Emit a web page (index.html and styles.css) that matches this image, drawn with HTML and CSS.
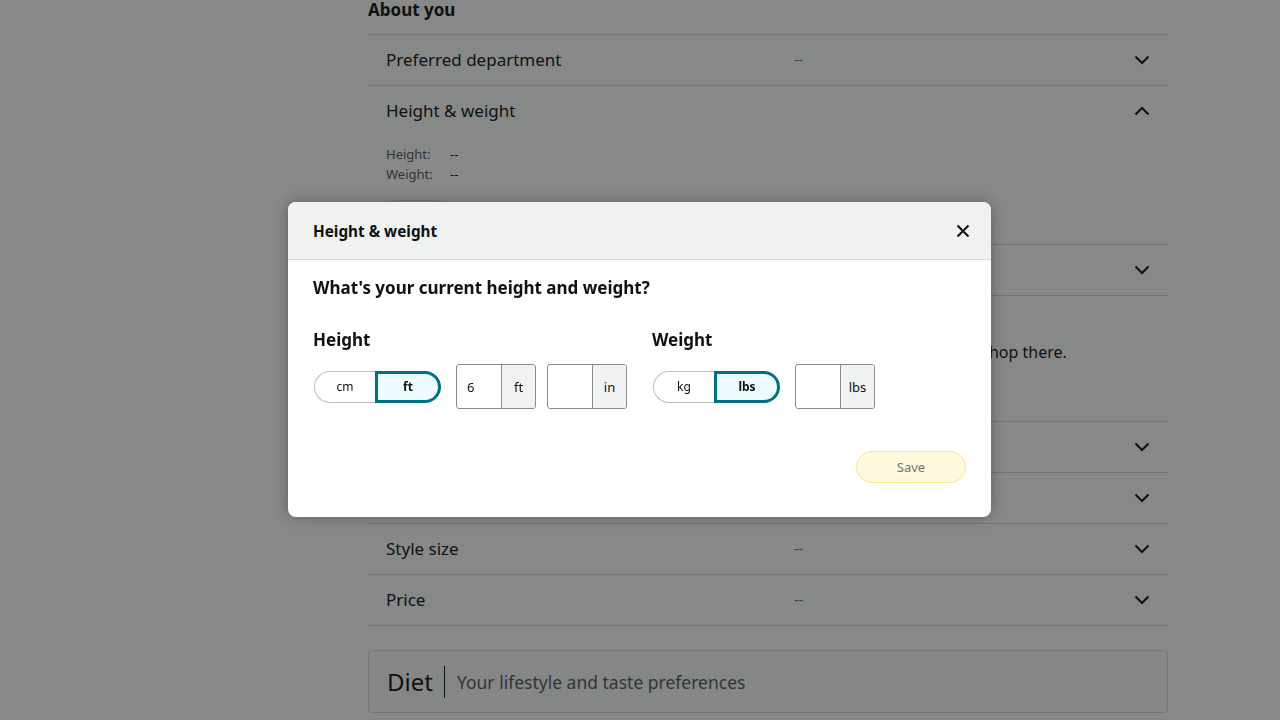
FILE: index.html
```html
<!DOCTYPE html>
<html lang="en">
<head>
<meta charset="utf-8">
<title>Height &amp; weight</title>
<link rel="stylesheet" href="styles.css">
</head>
<body>
<main class="page">
  <h2 class="section-title">About you</h2>
  <div class="list">
    <div class="row">
      <span class="row-label">Preferred department</span>
      <span class="row-value">--</span>
      <svg class="chev" viewBox="0 0 16 10"><path d="M1.5 1.5 L8 8 L14.5 1.5"/></svg>
    </div>
    <div class="row-expanded">
      <div class="row">
        <span class="row-label">Height &amp; weight</span>
        <span class="row-value"></span>
        <svg class="chev" viewBox="0 0 16 10"><path d="M1.5 8.5 L8 2 L14.5 8.5"/></svg>
      </div>
      <dl class="details">
        <div class="detail"><dt>Height:</dt><dd>--</dd></div>
        <div class="detail"><dt>Weight:</dt><dd>--</dd></div>
      </dl>
      <button class="edit-btn">Edit</button>
    </div>
    <div class="row">
      <span class="row-label">Body shape</span>
      <span class="row-value">--</span>
      <svg class="chev" viewBox="0 0 16 10"><path d="M1.5 1.5 L8 8 L14.5 1.5"/></svg>
    </div>
    <div class="block">
      <div class="block-title">Brands</div>
      <p class="block-text">Tell us the brands you like so we can show you more styles from the places you shop there.</p>
    </div>
    <div class="row">
      <span class="row-label">Fit</span>
      <span class="row-value">--</span>
      <svg class="chev" viewBox="0 0 16 10"><path d="M1.5 1.5 L8 8 L14.5 1.5"/></svg>
    </div>
    <div class="row">
      <span class="row-label">Clothing size</span>
      <span class="row-value">--</span>
      <svg class="chev" viewBox="0 0 16 10"><path d="M1.5 1.5 L8 8 L14.5 1.5"/></svg>
    </div>
    <div class="row">
      <span class="row-label">Style size</span>
      <span class="row-value">--</span>
      <svg class="chev" viewBox="0 0 16 10"><path d="M1.5 1.5 L8 8 L14.5 1.5"/></svg>
    </div>
    <div class="row">
      <span class="row-label">Price</span>
      <span class="row-value">--</span>
      <svg class="chev" viewBox="0 0 16 10"><path d="M1.5 1.5 L8 8 L14.5 1.5"/></svg>
    </div>
  </div>
  <div class="diet">
    <span class="diet-title">Diet</span>
    <span class="diet-sub">Your lifestyle and taste preferences</span>
  </div>
</main>

<div class="overlay">
  <div class="modal" role="dialog">
    <header class="modal-head">
      <h3 class="modal-title">Height &amp; weight</h3>
      <svg class="close" viewBox="0 0 14 14"><path d="M1.5 1.5 L12.5 12.5 M12.5 1.5 L1.5 12.5"/></svg>
    </header>
    <div class="modal-body">
      <p class="question">What's your current height and weight?</p>
      <div class="fields">
        <div class="field">
          <div class="field-label">Height</div>
          <div class="controls">
            <div class="toggle">
              <span class="seg">cm</span>
              <span class="seg on">ft</span>
            </div>
            <div class="unit-input"><span class="val">6</span><span class="unit">ft</span></div>
            <div class="unit-input"><span class="val"></span><span class="unit">in</span></div>
          </div>
        </div>
        <div class="field">
          <div class="field-label">Weight</div>
          <div class="controls">
            <div class="toggle">
              <span class="seg">kg</span>
              <span class="seg on">lbs</span>
            </div>
            <div class="unit-input"><span class="val"></span><span class="unit">lbs</span></div>
          </div>
        </div>
      </div>
      <div class="actions">
        <button class="save">Save</button>
      </div>
    </div>
  </div>
</div>
</body>
</html>
```

FILE: styles.css
```css
* { box-sizing: border-box; }
html, body { margin: 0; padding: 0; }
body {
  font-family: "Noto Sans", "Open Sans", sans-serif;
  color: #0f1111;
  background: #ffffff;
  width: 1280px;
  height: 720px;
  overflow: hidden;
}
.page {
  padding-left: 368px;
  width: 1168px;
  margin-top: -2px;
}
.section-title {
  margin: 0;
  font-size: 17px;
  line-height: 24px;
  font-weight: 700;
  height: 36px;
}
.list { border-top: 1px solid #d5d9d9; }
.row {
  display: flex;
  align-items: center;
  height: 51px;
  padding: 0 18px 1px;
  border-bottom: 1px solid #d5d9d9;
}
.row-expanded { border-bottom: 1px solid #d5d9d9; height: 159px; }
.row-expanded .row { border-bottom: none; height: 50px; }
.row-label { width: 408px; font-size: 17px; }
.row-value { flex: 1; color: #6f7373; font-size: 14px; }
.chev { width: 16px; height: 10px; fill: none; stroke: #0f1111; stroke-width: 2; }
.details { margin: 8px 0 0; padding: 0 18px; }
.detail { display: flex; font-size: 13px; line-height: 20px; }
.detail dt { width: 64px; color: #565959; }
.detail dd { margin: 0; color: #0f1111; }
.edit-btn {
  margin: 16px 0 0 20px;
  width: 56px; height: 30px;
  border: 1px solid #d5d9d9; border-radius: 8px;
  background: #fff; font: inherit; font-size: 13px;
}
.block { height: 126px; padding: 12px 18px; border-bottom: 1px solid #d5d9d9; }
.block-title { font-size: 17px; line-height: 24px; }
.block-text { margin: 8px 0 0; font-size: 16px; line-height: 24px; }
.diet {
  margin-top: 24px;
  width: 800px; height: 63px;
  display: flex; align-items: center;
  background: #fbfcfc;
  border: 1px solid #d5d9d9;
  border-radius: 4px;
  padding-left: 18px;
}
.diet-title { font-size: 24px; padding-right: 11px; border-right: 1px solid #0f1111; line-height: 32px; }
.diet-sub { font-size: 17.5px; color: #565959; padding-left: 12px; }

.overlay {
  position: fixed; inset: 0;
  background: rgba(15, 17, 17, 0.5);
  display: flex; align-items: center; justify-content: center;
  padding-right: 1px;
  padding-bottom: 1px;
}
.modal {
  width: 703px;
  background: #fff;
  border-radius: 8px;
  overflow: hidden;
  box-shadow: 0 0 14px rgba(0, 0, 0, 0.3);
}
.modal-head {
  height: 58px;
  background: #f0f2f2;
  border-bottom: 1px solid #d5d9d9;
  display: flex; align-items: center; justify-content: space-between;
  padding: 0 21px 0 25px;
}
.modal-title { margin: 0; font-size: 15.3px; font-weight: 700; }
.close { width: 14px; height: 14px; fill: none; stroke: #0f1111; stroke-width: 2; }
.modal-body { padding: 15px 25px 34px; }
.question { margin: 0; font-size: 17px; font-weight: 700; line-height: 26px; }
.fields { display: flex; gap: 25px; margin-top: 27px; }
.field-label { font-size: 17px; font-weight: 700; line-height: 24px; }
.controls { display: flex; align-items: center; gap: 11px; margin-top: 12px; }
.toggle { display: flex; height: 32px; width: 127px; margin: 0 4px 0 1px; }
.seg {
  flex: 1;
  display: flex; align-items: center; justify-content: center;
  font-size: 12px;
  border: 1px solid #bbbfbf;
  border-right: none;
  border-radius: 16px 0 0 16px;
  background: #fff;
}
.seg.on {
  border: 3px solid #007185;
  border-radius: 0 16px 16px 0;
  background: #edfdff;
  font-weight: 700;
  flex: 0 0 66px;
}
.unit-input {
  display: flex; height: 45px; width: 80px;
  border: 1px solid #888c8c; border-radius: 3px;
  overflow: hidden;
  font-size: 13px;
}
.val { width: 44px; display: flex; align-items: center; padding-left: 10px; }
.unit { flex: 1; display: flex; align-items: center; justify-content: center; background: #f0f2f2; border-left: 1px solid #888c8c; }
.actions { display: flex; justify-content: flex-end; margin-top: 42px; }
.save {
  width: 110px; height: 32px;
  border: 1px solid #fce58a; border-radius: 16px;
  background: #fff9dd; color: #6f7373;
  font: inherit; font-size: 13px;
}
```
